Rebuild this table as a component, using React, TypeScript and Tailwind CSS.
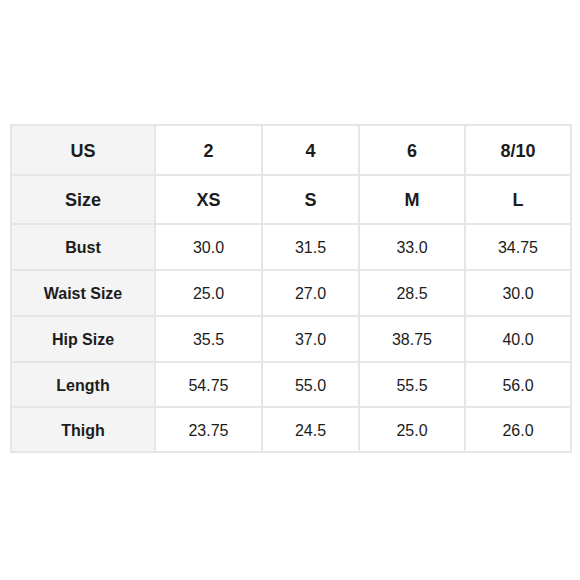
const rows: string[][] = [
  ['US', '2', '4', '6', '8/10'],
  ['Size', 'XS', 'S', 'M', 'L'],
  ['Bust', '30.0', '31.5', '33.0', '34.75'],
  ['Waist Size', '25.0', '27.0', '28.5', '30.0'],
  ['Hip Size', '35.5', '37.0', '38.75', '40.0'],
  ['Length', '54.75', '55.0', '55.5', '56.0'],
  ['Thigh', '23.75', '24.5', '25.0', '26.0'],
]

export default function App() {
  return (
    <div className="w-[580px] h-[580px] bg-white pt-[124px] pl-[10px] font-['Liberation_Sans',Arial,sans-serif] text-[#1c1c1c]">
      <div className="grid w-[562px] grid-cols-[142px_105px_95px_104px_104px] grid-rows-[48px_47px_44px_44px_44px_43px_43px] gap-[2px] bg-[#e6e6e6] p-[2px]">
        {rows.map((row, r) =>
          row.map((cell, c) => {
            const header = r < 2
            const label = c === 0
            return (
              <div
                key={`${r}-${c}`}
                className={
                  'flex items-center justify-center pt-[2px] ' +
                  (label ? 'bg-[#f4f4f4] ' : 'bg-white ') +
                  (header ? 'text-[18px] font-bold ' : label ? 'text-[16px] font-bold ' : 'text-[16px] ')
                }
              >
                {cell}
              </div>
            )
          })
        )}
      </div>
    </div>
  )
}
